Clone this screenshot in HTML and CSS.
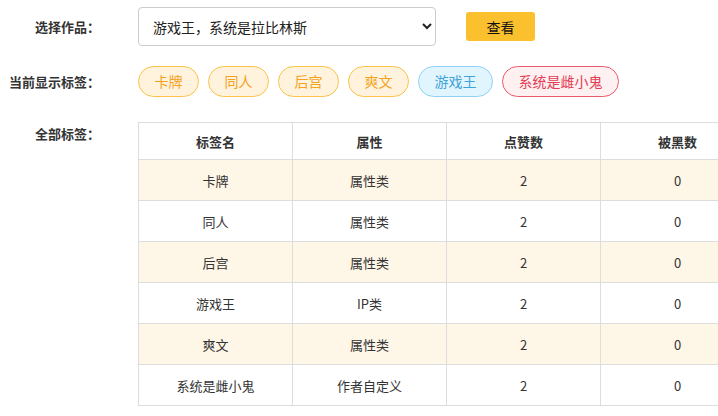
FILE: index.html
```html
<!DOCTYPE html>
<html lang="zh-CN">
<head>
    <meta charset="UTF-8">
    <meta name="viewport" content="width=device-width, initial-scale=1.0">
    <title>作品标签</title>
    <link rel="stylesheet" href="styles.css">
</head>
<body>
    <div class="form-row row-select">
        <label class="form-label" for="work">选择作品：</label>
        <div class="form-body">
            <select id="work" class="work-select">
                <option>游戏王，系统是拉比林斯</option>
            </select>
            <button class="view-btn">查看</button>
        </div>
    </div>
    <div class="form-row row-tags">
        <span class="form-label">当前显示标签：</span>
        <div class="form-body tag-list">
            <span class="tag tag-attr">卡牌</span>
            <span class="tag tag-attr">同人</span>
            <span class="tag tag-attr">后宫</span>
            <span class="tag tag-attr">爽文</span>
            <span class="tag tag-ip">游戏王</span>
            <span class="tag tag-custom">系统是雌小鬼</span>
        </div>
    </div>
    <div class="form-row row-table">
        <span class="form-label">全部标签：</span>
        <div class="form-body">
            <table class="tag-table">
                <thead>
                    <tr><th>标签名</th><th>属性</th><th>点赞数</th><th>被黑数</th><th></th></tr>
                </thead>
                <tbody>
                    <tr><td>卡牌</td><td>属性类</td><td>2</td><td>0</td><td></td></tr>
                    <tr><td>同人</td><td>属性类</td><td>2</td><td>0</td><td></td></tr>
                    <tr><td>后宫</td><td>属性类</td><td>2</td><td>0</td><td></td></tr>
                    <tr><td>游戏王</td><td>IP类</td><td>2</td><td>0</td><td></td></tr>
                    <tr><td>爽文</td><td>属性类</td><td>2</td><td>0</td><td></td></tr>
                    <tr><td>系统是雌小鬼</td><td>作者自定义</td><td>2</td><td>0</td><td></td></tr>
                </tbody>
            </table>
        </div>
    </div>
</body>
</html>
```

FILE: styles.css
```css
html {
    overflow: hidden;
}
body {
    margin: 0;
    padding-top: 7px;
    font-family: "Microsoft YaHei", "Noto Sans CJK SC", sans-serif;
    font-size: 14px;
    color: #333;
    background: #fff;
}
.form-row {
    display: flex;
    align-items: center;
}
.form-label {
    width: 100px;
    flex: none;
    text-align: right;
    font-weight: bold;
    font-size: 13px;
    color: #333;
    white-space: nowrap;
}
.form-body {
    margin-left: 38px;
    display: flex;
    align-items: center;
}
.row-tags {
    margin-top: 20px;
}
.row-table {
    margin-top: 25px;
    align-items: flex-start;
}
.row-table .form-label {
    padding-top: 2px;
}
.work-select {
    width: 298px;
    height: 39px;
    padding: 0 10px 0 10px;
    border: 1px solid #ccc;
    border-radius: 4px;
    background: #fff;
    font-family: inherit;
    font-size: 14px;
    color: #222;
}
.view-btn {
    margin-left: 30px;
    width: 69px;
    height: 29px;
    border: none;
    border-radius: 3px;
    background-color: #fbc02d;
    color: #111;
    font-family: inherit;
    font-size: 14px;
    cursor: pointer;
}
.tag-list {
    gap: 9px;
}
.tag {
    display: inline-block;
    height: 29px;
    line-height: 29px;
    padding: 0 15.5px;
    border: 1px solid;
    border-radius: 16px;
    font-size: 14px;
    white-space: nowrap;
}
.tag-attr {
    background-color: #fff3dd;
    border-color: #fbc34a;
    color: #f4a21e;
}
.tag-ip {
    background-color: #e1f5fe;
    border-color: #8ed1f4;
    color: #3fa2d8;
}
.tag-custom {
    background-color: #fff0f1;
    border-color: #ea5b6e;
    color: #e23d54;
}
.tag-table {
    border-collapse: collapse;
    table-layout: fixed;
    width: 771px;
    font-size: 13px;
}
.tag-table th,
.tag-table td {
    width: 153px;
    border: 1px solid #ddd;
    text-align: center;
    padding: 0;
}
.tag-table th {
    height: 36px;
    font-weight: bold;
    color: #333;
}
.tag-table td {
    height: 40px;
    color: #333;
}
.tag-table tbody tr:nth-child(odd) {
    background-color: #fef6e7;
}
```
